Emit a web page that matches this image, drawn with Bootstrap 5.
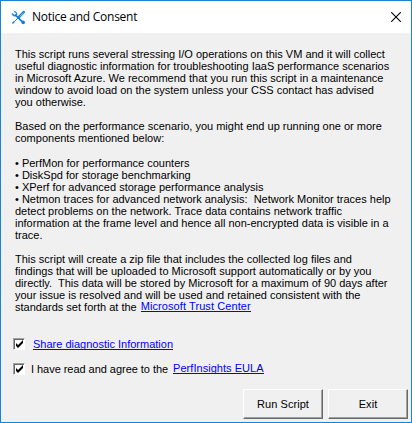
<!DOCTYPE html>
<html lang="en">
<head>
<meta charset="utf-8">
<meta name="viewport" content="width=device-width, initial-scale=1">
<title>Notice and Consent</title>
<link href="https://cdn.jsdelivr.net/npm/bootstrap@5.3.0/dist/css/bootstrap.min.css" rel="stylesheet">
<style>
  body { font: 11px/12px "Liberation Sans", Arial, sans-serif; color: #000; }
  .dialog { width: 412px; height: 423px; border: 1px solid #1883d7; background: #f0f0f0; overflow: hidden; }
  .titlebar { height: 32px; flex: none; background: #fff; padding: 0 10px; }
  .caption { font: 12px/16px "Open Sans", "Segoe UI", sans-serif; letter-spacing: -.26px; margin: 0 0 1px 6px; }
  .close-x { line-height: 0; }
  .notice { padding: 15px 0 0 14px; white-space: pre; }
  .notice p { margin: 0 0 12px; }
  .notice p:nth-child(2) { margin-bottom: 13px; }
  a, a:hover { color: #00f; text-decoration: none; border-bottom: 1px solid #00f; display: inline-block; line-height: 13px; height: 12px; white-space: pre; }
  .trust { margin: -2px 0 0 1px; vertical-align: 1px; letter-spacing: .08px; }
  .notice p:last-child { margin: 0; height: 60px; }
  .options { padding: 25px 0 0 12px; }
  .option { height: 25px; }
  .tick { width: 12px; height: 12px; flex: none; background: #fff; border: 1px solid; border-color: #a0a0a0 #fff #fff #a0a0a0; box-shadow: inset 1px 1px #696969; line-height: 0; }
  .agree { margin-left: 6px; letter-spacing: -.04px; }
  .eula { letter-spacing: .03px; margin: -1px 0 0 5px; }
  .push { width: 80px; height: 30px; border: 1px solid; border-color: #fff #696969 #696969 #fff; box-shadow: inset -1px -1px #a0a0a0; border-radius: 0; background: #f0f0f0; color: #000; font: inherit; padding: 0; letter-spacing: .06px; }
  .actions { gap: 5px; padding: 0 3px 3px 0; }
</style>
<script src="https://cdn.jsdelivr.net/npm/bootstrap@5.3.0/dist/js/bootstrap.bundle.min.js"></script>
</head>
<body>
<main class="dialog d-flex flex-column">
  <header class="titlebar d-flex align-items-center">
    <svg width="15" height="15" viewBox="0 0 16 16" fill="none" stroke="#0f7fdb" aria-hidden="true">
      <path d="M4.5 5.2 13 13.5" stroke-width="1.8"/>
      <path d="M3 1.3 5.8 3.8 4 5.6 1.2 3.4C.8 5.2 2.4 7 4.6 6.5L6.4 5C6.8 3 5 1 3 1.3Z" fill="#0f7fdb" stroke-width=".5"/>
      <circle cx="13" cy="13.2" r="1.9" fill="#0f7fdb" stroke="none"/>
      <path d="M8.6 7.3 13.6 2.3" stroke-width="2.8" stroke-linecap="round"/>
      <path d="M9.5 6.8 13.6 2.7" stroke="#b5daf8" stroke-width=".9"/>
      <path d="M8 8 2.5 13.5" stroke-width="1"/>
      <path d="M3.4 12.5 1.5 14.4" stroke-width="1.6"/>
    </svg>
    <span class="caption">Notice and Consent</span>
    <span class="close-x ms-auto" role="button" aria-label="Close">
      <svg width="10" height="10" viewBox="0 0 10 10" stroke="#000" stroke-width="1.1"><path d="M.2.2l9.6 9.6M9.8.2.2 9.8"/></svg>
    </span>
  </header>
  <section class="notice"><p>This script runs several stressing I/O operations on this VM and it will collect
useful diagnostic information for troubleshooting IaaS performance scenarios
in Microsoft Azure. We recommend that you run this script in a maintenance
window to avoid load on the system unless your CSS contact has advised
you otherwise.</p><p>Based on the performance scenario, you might end up running one or more
components mentioned below:</p><p>• PerfMon for performance counters
• DiskSpd for storage benchmarking
• XPerf for advanced storage performance analysis
• Netmon traces for advanced network analysis:  Network Monitor traces help
detect problems on the network. Trace data contains network traffic
information at the frame level and hence all non-encrypted data is visible in a
trace.</p><p>This script will create a zip file that includes the collected log files and
findings that will be uploaded to Microsoft support automatically or by you
directly.  This data will be stored by Microsoft for a maximum of 90 days after
your issue is resolved and will be used and retained consistent with the
standards set forth at the <a class="trust" href="#">Microsoft Trust Center</a></p></section>
  <section class="options">
    <div class="option d-flex align-items-start">
      <span class="tick" role="checkbox" aria-checked="true" aria-label="Share diagnostic information"><svg width="10" height="10" viewBox="0 0 10 10"><path d="M2 4v3l2 2 5-5V1L4 6Z"/></svg></span>
      <a class="ms-2" href="#">Share diagnostic Information</a>
    </div>
    <div class="option d-flex align-items-start">
      <span class="tick" role="checkbox" aria-checked="true" aria-label="Agree to the EULA"><svg width="10" height="10" viewBox="0 0 10 10"><path d="M2 4v3l2 2 5-5V1L4 6Z"/></svg></span>
      <span class="agree">I have read and agree to the</span>
      <a class="eula" href="#">PerfInsights EULA</a>
    </div>
  </section>
  <footer class="actions d-flex justify-content-end mt-auto">
    <button class="btn push" type="button">Run Script</button>
    <button class="btn push" type="button">Exit</button>
  </footer>
</main>
</body>
</html>
